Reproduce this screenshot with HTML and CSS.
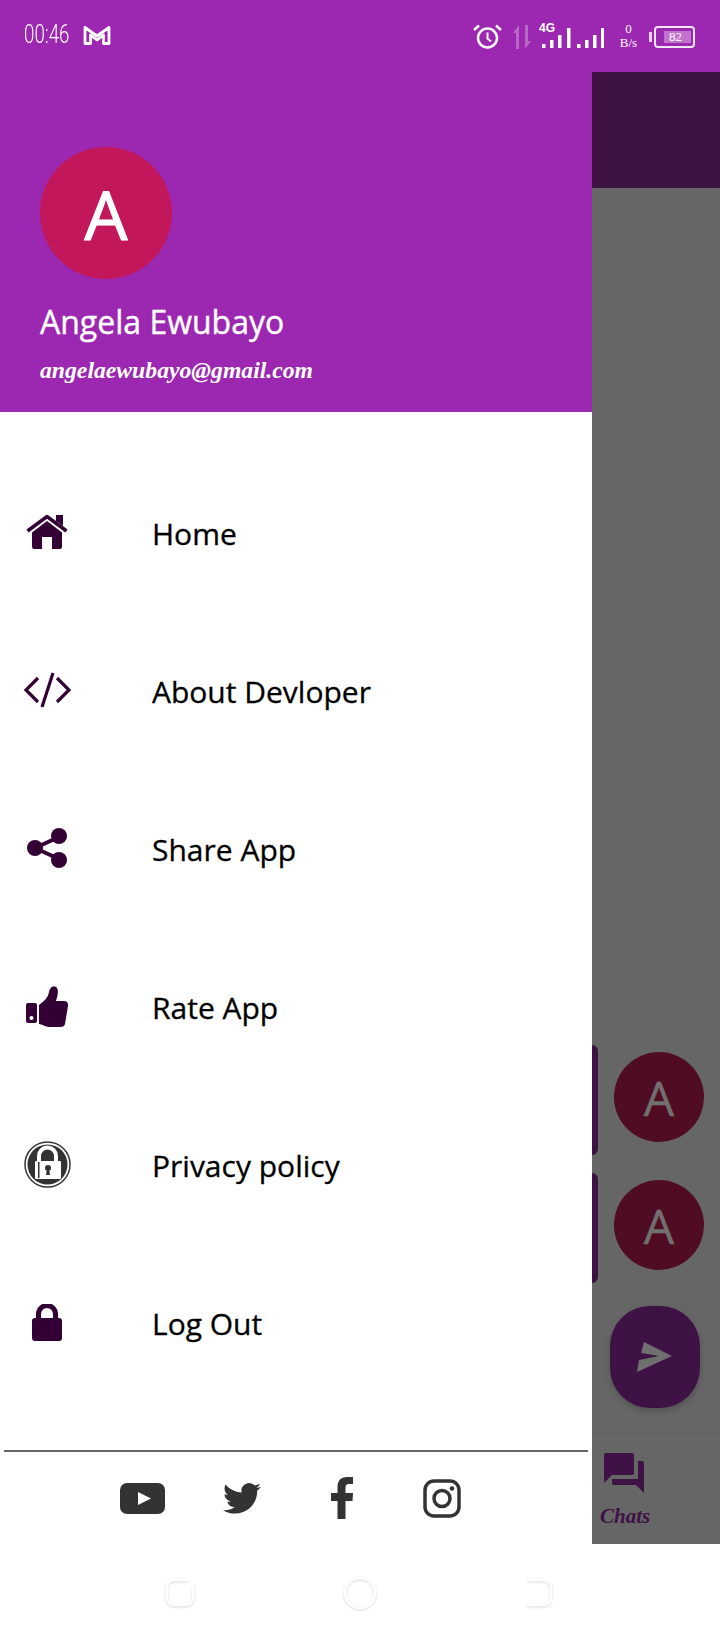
FILE: index.html
```html
<!DOCTYPE html>
<html lang="en">
<head>
    <meta charset="UTF-8">
    <meta name="viewport" content="width=device-width, initial-scale=1.0">
    <title>Chats</title>
    <link rel="stylesheet" href="styles.css">
</head>
<body>
    <div class="phone">
        <!-- Status bar -->
        <div class="status-bar">
            <div class="status-left">
                <span class="status-time">00:46</span>
                <svg class="icon-gmail" width="28" height="20" viewBox="0 0 28 20"><path d="M2 18.500V2.500L14 11 26 2.500V18.500H20.500V10L14 15 7.500 10V18.500Z" fill="none" stroke="#fff" stroke-width="2.800" stroke-linejoin="round"/></svg>
            </div>
            <div class="status-right">
                <svg width="29" height="26" viewBox="0 0 29 26"><circle cx="14.500" cy="15" r="9.500" fill="none" stroke="#fff" stroke-width="2.500"/><path d="M14.500 9.500v6l3.500 3" fill="none" stroke="#fff" stroke-width="2"/><path d="M1 7 6 2.500M28 7 23 2.500" stroke="#fff" stroke-width="2.500"/></svg>
                <svg class="icon-arrows" width="18" height="24" viewBox="0 0 18 24"><path d="M0 8 6 0V24H3V8ZM18 16 12 24V0H15V16Z" fill="#fff" opacity=".3"/></svg>
                <div class="signal">
                    <span class="signal-label">4G</span>
                    <svg width="62" height="21" viewBox="0 0 62 21"><path d="M0 17h3.500v4H0ZM8 13h3.500v8H8ZM16 8h3.500v13H16ZM25 1h3.500v20H25ZM35 17h3.500v4H35ZM43 13h3.500v8H43ZM51 8h3.500v13H51ZM59 1h3v20h-3Z" fill="#fff"/></svg>
                </div>
                <div class="net-speed"><span>0</span><span>B/s</span></div>
                <div class="battery">
                    <span class="battery-nub"></span>
                    <div class="battery-body"><span class="battery-level">82</span></div>
                </div>
            </div>
        </div>

        <div class="main">
            <!-- Navigation drawer -->
            <div class="drawer">
                <div class="drawer-header">
                    <div class="avatar-large">A</div>
                    <div class="user-name">Angela Ewubayo</div>
                    <div class="user-mail">angelaewubayo@gmail.com</div>
                </div>

                <div class="menu">
                    <a class="menu-item" href="#">
                        <span class="menu-icon"><svg width="42" height="34" viewBox="0 0 42 34"><path d="M6 17.500 21 6 36 17.500V32a2 2 0 0 1-2 2H26V22H16V34H8a2 2 0 0 1-2-2Z" fill="#330036"/><path d="M1.500 16 21 1.500 40.500 16" fill="none" stroke="#330036" stroke-width="3.500"/><path d="M30 0h7V11L30 6Z" fill="#330036"/></svg></span>
                        Home
                    </a>
                    <a class="menu-item" href="#">
                        <span class="menu-icon"><svg width="47" height="36" viewBox="0 0 47 36"><path d="M14 6 2 18 14 30M33 6 45 18 33 30M29 1 18 35" fill="none" stroke="#330036" stroke-width="3.200"/></svg></span>
                        About Devloper
                    </a>
                    <a class="menu-item" href="#">
                        <span class="menu-icon"><svg width="40" height="40" viewBox="0 0 40 40"><path d="M32 9 8 20 32 31" fill="none" stroke="#330036" stroke-width="4"/><circle cx="8" cy="20" r="8" fill="#330036"/><circle cx="32" cy="8" r="8" fill="#330036"/><circle cx="32" cy="32" r="8" fill="#330036"/></svg></span>
                        Share App
                    </a>
                    <a class="menu-item" href="#">
                        <span class="menu-icon"><svg width="42" height="41" viewBox="0 0 42 41"><path d="M2 17H9a2 2 0 0 1 2 2V35a2 2 0 0 1-2 2H2a2 2 0 0 1-2-2V19a2 2 0 0 1 2-2Z" fill="#330036"/><circle cx="5.500" cy="32" r="2" fill="#fff"/><path d="M13 19C18 15 22 12 23 6 24 1 27-1 30 1 33 3 32 9 30 15H38C41 15 42.500 17 42 20L39 38C38.500 40 37 41 35 41H23C19 41 16 38 13 38Z" fill="#330036"/></svg></span>
                        Rate App
                    </a>
                    <a class="menu-item" href="#">
                        <span class="menu-icon"><svg width="47" height="47" viewBox="0 0 47 47"><circle cx="23.500" cy="23.500" r="22.500" fill="none" stroke="#333" stroke-width="1.500"/><circle cx="23.500" cy="23.500" r="20" fill="#333"/><path d="M15 23V15a8.500 8.500 0 0 1 17 0V23" fill="none" stroke="#fff" stroke-width="4"/><rect x="11" y="20" width="26" height="18" rx="1" fill="#fff"/><rect x="14" y="21" width="1.500" height="16" fill="#333"/><circle cx="24" cy="27" r="3" fill="#333"/><path d="M23 28h2l1 6h-4Z" fill="#333"/></svg></span>
                        Privacy policy
                    </a>
                    <a class="menu-item" href="#">
                        <span class="menu-icon"><svg width="30" height="37" viewBox="0 0 30 37"><path d="M6.500 16V10a8.500 8.500 0 0 1 17 0V16" fill="none" stroke="#330036" stroke-width="5"/><rect y="14" width="30" height="23" rx="3" fill="#330036"/></svg></span>
                        Log Out
                    </a>
                </div>

                <div class="social">
                    <svg width="45" height="31" viewBox="0 0 45 31"><rect width="45" height="31" rx="7" fill="#333"/><path d="M18 9 31 15.500 18 22Z" fill="#fff"/></svg>
                    <svg width="38" height="32" viewBox="0 1.500 24 20.500" preserveAspectRatio="none"><path d="M23.953 4.570a10 10 0 0 1-2.825.775 4.958 4.958 0 0 0 2.163-2.723c-.951.555-2.005.959-3.127 1.184a4.920 4.920 0 0 0-8.384 4.482C7.690 8.095 4.067 6.130 1.640 3.162a4.822 4.822 0 0 0-.666 2.475c0 1.710.870 3.213 2.188 4.096a4.904 4.904 0 0 1-2.228-.616v.06a4.923 4.923 0 0 0 3.946 4.827 4.996 4.996 0 0 1-2.212.085 4.936 4.936 0 0 0 4.604 3.417 9.867 9.867 0 0 1-6.102 2.105c-.390 0-.779-.023-1.170-.067a13.995 13.995 0 0 0 7.557 2.209c9.053 0 13.998-7.496 13.998-13.985 0-.210 0-.420-.015-.630A9.935 9.935 0 0 0 24 4.590z" fill="#333"/></svg>
                    <svg width="22" height="42" viewBox="0 0 22 42"><path d="M14.500 42V24H21.500L22 16H14.500V11C14.500 8 15.500 7 18 7H22V0H16C9.500 0 6.500 4 6.500 10V16H0V24H6.500V42Z" fill="#333"/></svg>
                    <svg width="38" height="39" viewBox="0 0 38 39"><rect x="2" y="2" width="34" height="35" rx="9" fill="none" stroke="#333" stroke-width="3.500"/><circle cx="19" cy="19.500" r="8" fill="none" stroke="#333" stroke-width="3.500"/><circle cx="29" cy="9.500" r="2.300" fill="#333"/></svg>
                </div>
            </div>

            <!-- Dimmed chat screen behind the drawer -->
            <div class="scrim">
                <div class="app-bar"></div>
                <div class="chat-list">
                    <div class="chat-row">
                        <span class="chat-bubble"></span>
                        <div class="avatar-small">A</div>
                    </div>
                    <div class="chat-row">
                        <span class="chat-bubble"></span>
                        <div class="avatar-small">A</div>
                    </div>
                </div>
                <div class="fab">
                    <svg width="36" height="30" viewBox="0 0 36 30"><path d="M7 0 35 14 0 30 2 18 22 14 4 11Z" fill="#6f6f6f"/></svg>
                </div>
                <div class="bottom-nav">
                    <svg width="40" height="40" viewBox="2 2 20 20"><path d="M21 6h-2v9H6v2c0 .55.45 1 1 1h11l4 4V7c0-.55-.45-1-1-1zm-4 6V3c0-.55-.45-1-1-1H3c-.55 0-1 .45-1 1v14l4-4h10c.55 0 1-.45 1-1z" fill="#3e1245"/></svg>
                    <span class="nav-label">Chats</span>
                </div>
            </div>
        </div>

        <!-- System navigation -->
        <div class="nav-bar">
            <svg width="32" height="32" viewBox="0 0 32 32"><path d="M24 4H10a7 7 0 0 0-7 7V22a7 7 0 0 0 7 7H22a7 7 0 0 0 7-7V9" fill="none" stroke="#fff" stroke-width="2.500"/></svg>
            <svg width="34" height="34" viewBox="0 0 34 34"><circle cx="17" cy="17" r="15" fill="none" stroke="#fff" stroke-width="2.500"/></svg>
            <svg width="30" height="32" viewBox="0 0 30 32"><path d="M3 4H20a7 7 0 0 1 7 7V22a7 7 0 0 1-7 7H3" fill="none" stroke="#fff" stroke-width="2.500"/></svg>
        </div>
    </div>
</body>
</html>
```

FILE: styles.css
```css
* {
    box-sizing: border-box;
    margin: 0;
    padding: 0;
}

body {
    font-family: "Open Sans", sans-serif;
    background-color: white;
    color: black;
}

.phone {
    width: 720px;
    height: 1640px;
    display: flex;
    flex-direction: column;
    overflow: hidden;
}

.status-bar {
    height: 72px;
    flex-shrink: 0;
    display: flex;
    justify-content: space-between;
    align-items: flex-start;
    padding: 22px 25px 0 24px;
    background-color: #9c27b0;
    color: white;
}

.status-left {
    display: flex;
    align-items: center;
    gap: 13px;
}

.status-time {
    width: 46px;
    font-family: Roboto, sans-serif;
    font-weight: 300;
    font-size: 26px;
    line-height: 24px;
    white-space: nowrap;
    transform: scaleX(0.72);
    transform-origin: left center;
}

.icon-gmail {
    margin-top: 2px;
}

.status-right {
    display: flex;
    align-items: flex-start;
}

.status-right > svg {
    margin-top: 1px;
}

.status-right > .icon-arrows {
    margin: 3px 8px 0 11px;
}

.signal {
    width: 65px;
    height: 26px;
    position: relative;
    display: flex;
    align-items: flex-end;
    justify-content: flex-end;
}

.signal-label {
    position: absolute;
    top: 0;
    left: 0;
    font-family: "Liberation Sans", sans-serif;
    font-size: 12px;
    font-weight: bold;
    line-height: 12px;
}

.net-speed {
    width: 45px;
    margin-left: 2px;
    display: flex;
    flex-direction: column;
    align-items: center;
    font-family: "Liberation Serif", serif;
    font-size: 13px;
    line-height: 14px;
}

.battery {
    display: flex;
    align-items: center;
    margin-top: 4px;
    margin-left: -2px;
}

.battery-nub {
    width: 3px;
    height: 10px;
    margin-right: 2px;
    background-color: #e8cfee;
}

.battery-body {
    width: 41px;
    height: 22px;
    padding: 3px 2px 3px 8px;
    border: 2px solid #f3e4f6;
    border-radius: 4px;
}

.battery-level {
    display: block;
    height: 12px;
    padding-left: 5px;
    background-color: #c273d0;
    font-family: "Liberation Serif", serif;
    font-size: 13px;
    line-height: 12px;
}

.main {
    flex: 1;
    display: flex;
    min-height: 0;
}

.drawer {
    width: 592px;
    flex-shrink: 0;
    display: flex;
    flex-direction: column;
}

.drawer-header {
    height: 340px;
    padding: 75px 0 0 40px;
    background-color: #9c27b0;
    color: white;
}

.avatar-large {
    width: 132px;
    height: 132px;
    display: flex;
    align-items: center;
    justify-content: center;
    border-radius: 50%;
    background-color: #c2185b;
    font-size: 68px;
    -webkit-text-stroke: 1.2px white;
}

.user-name {
    margin-top: 21px;
    font-size: 32px;
    line-height: 44px;
    -webkit-text-stroke: 0.4px white;
}

.user-mail {
    margin-top: 10px;
    font-family: "Liberation Serif", serif;
    font-style: italic;
    font-weight: bold;
    font-size: 23.7px;
    line-height: 32px;
}

.menu {
    padding-top: 42px;
}

.menu-item {
    height: 158px;
    display: flex;
    align-items: center;
    color: black;
    text-decoration: none;
    font-size: 30px;
    -webkit-text-stroke: 0.3px black;
}

.menu-icon {
    width: 152px;
    flex-shrink: 0;
    display: flex;
    justify-content: center;
    padding: 0 58px 2px 0;
}

.social {
    height: 94px;
    margin: 48px 4px 0;
    padding-left: 88px;
    border-top: 2px solid #666;
    display: grid;
    grid-template-columns: repeat(4, 100px);
    justify-items: center;
    align-items: center;
}

.scrim {
    flex: 1;
    display: flex;
    flex-direction: column;
    height: 1472px;
    background-color: #666;
}

.app-bar {
    height: 116px;
    flex-shrink: 0;
    background-color: #3e1245;
}

.chat-list {
    margin-top: 857px;
    display: flex;
    flex-direction: column;
    gap: 18px;
}

.chat-row {
    height: 110px;
    display: flex;
    align-items: flex-start;
    gap: 16px;
}

.chat-bubble {
    width: 6px;
    height: 110px;
    border-radius: 0 8px 8px 0;
    background-color: #3e1245;
}

.avatar-small {
    width: 90px;
    height: 90px;
    margin-top: 7px;
    display: flex;
    align-items: center;
    justify-content: center;
    border-radius: 50%;
    background-color: #4f0c22;
    color: #707070;
    font-size: 48px;
    -webkit-text-stroke: 0.5px #707070;
}

.fab {
    width: 90px;
    height: 102px;
    margin: 23px 0 0 18px;
    display: flex;
    align-items: center;
    justify-content: center;
    border-radius: 40px;
    background-color: #3e1245;
    box-shadow: 0 3px 6px rgba(0, 0, 0, 0.2);
}

.bottom-nav {
    margin-top: 24px;
    flex: 1;
    padding: 20px 0 0 12px;
    border-top: 1px solid #636363;
    display: flex;
    flex-direction: column;
    align-items: flex-start;
}

.nav-label {
    margin: 9px 0 0 -4px;
    font-family: "Liberation Serif", serif;
    font-style: italic;
    font-weight: bold;
    font-size: 21px;
    line-height: 28px;
    color: #3e1245;
}

.nav-bar {
    height: 96px;
    flex-shrink: 0;
    margin-top: auto;
    display: flex;
    justify-content: space-between;
    align-items: flex-start;
    padding: 32px 166px 0 164px;
    background-color: white;
}

.nav-bar svg {
    filter: drop-shadow(0 1px 1px #d8d8d8);
}
```
